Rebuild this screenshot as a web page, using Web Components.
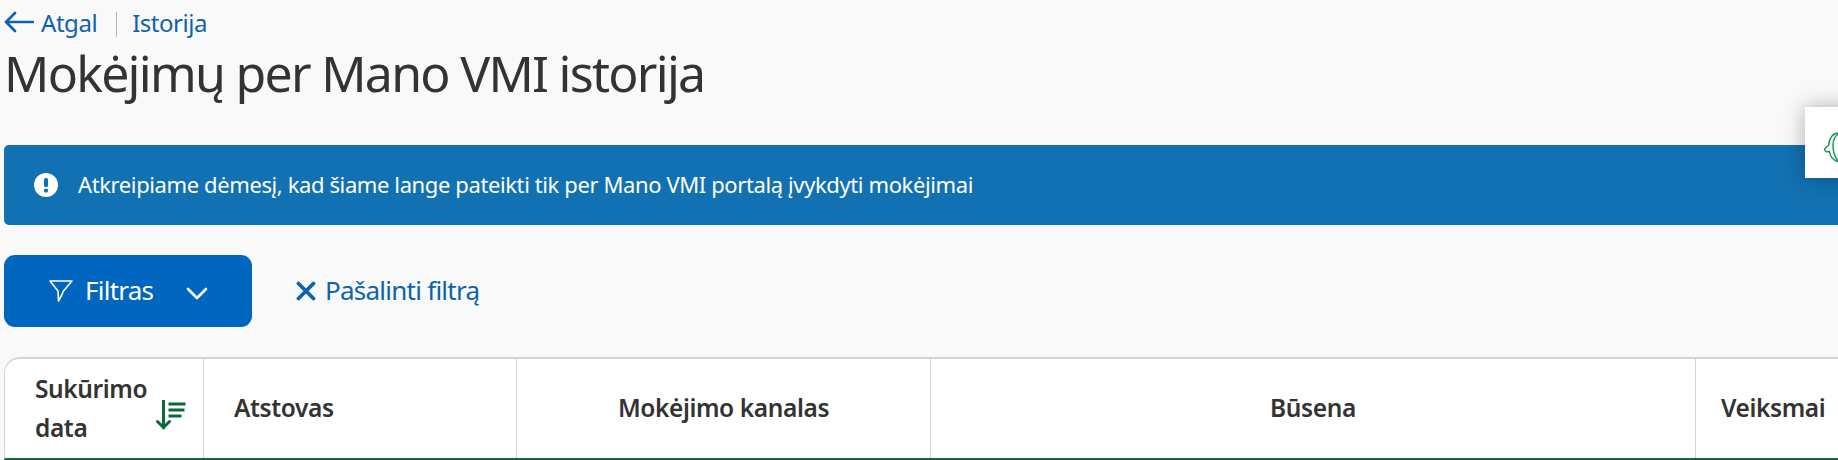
<!DOCTYPE html>
<html lang="lt">
<head>
<meta charset="utf-8">
<title>Mokėjimų per Mano VMI istorija</title>
<style>
  html, body { margin: 0; height: 100%; overflow: hidden; }
  body {
    background: #f9f9f9;
    color: #333;
    font-family: "Noto Sans", "Liberation Sans", sans-serif;
  }
  main { display: flex; flex-direction: column; padding: 0 0 0 4px; }
</style>
</head>
<body>
<main>
  <vmi-breadcrumb></vmi-breadcrumb>
  <vmi-title>Mokėjimų per Mano VMI istorija</vmi-title>
  <vmi-alert>Atkreipiame dėmesį, kad šiame lange pateikti tik per Mano VMI portalą įvykdyti mokėjimai</vmi-alert>
  <vmi-filters></vmi-filters>
  <vmi-table-head></vmi-table-head>
</main>
<vmi-help-tab></vmi-help-tab>

<script>
class VmiBreadcrumb extends HTMLElement {
  constructor() {
    super();
    this.attachShadow({ mode: "open" });
    this.shadowRoot.innerHTML = `
      <style>
        :host { display: flex; align-items: center; height: 46px; color: #0f62ac; font-size: 24px; letter-spacing: -0.46px; }
        span { margin-bottom: 2px; }
        svg { width: 30px; height: 22px; margin-right: 7px; margin-bottom: 2px; }
        .sep { width: 1px; height: 25px; background: #b0b8c0; margin: 2px 15px 0 19px; }
      </style>
      <svg viewBox="0 0 30 22" fill="none" stroke="#0f62ac" stroke-width="2.6" stroke-linecap="round" stroke-linejoin="round">
        <path d="M29 11H2M11 2l-9 9 9 9"/>
      </svg>
      <span>Atgal</span>
      <i class="sep"></i>
      <span>Istorija</span>
    `;
  }
}

class VmiTitle extends HTMLElement {
  constructor() {
    super();
    this.attachShadow({ mode: "open" });
    this.shadowRoot.innerHTML = `
      <style>
        :host { display: block; height: 99px; font-size: 50px; line-height: 54px; letter-spacing: -1.72px; color: #333; }
      </style>
      <slot></slot>
    `;
  }
}

class VmiAlert extends HTMLElement {
  constructor() {
    super();
    this.attachShadow({ mode: "open" });
    this.shadowRoot.innerHTML = `
      <style>
        :host { display: flex; align-items: center; height: 80px; padding-left: 30px; background: #1271b2; color: #fff; font-size: 22px; letter-spacing: -0.39px; border-radius: 5px 0 0 5px; }
        svg { width: 24px; height: 24px; margin-right: 20px; flex: none; }
        span { margin-bottom: 3px; }
      </style>
      <svg viewBox="0 0 24 24">
        <circle cx="12" cy="12" r="12" fill="#fff"/>
        <rect x="10" y="5" width="4" height="9" rx="1.6" fill="#1271b2"/>
        <circle cx="12" cy="17.6" r="2.1" fill="#1271b2"/>
      </svg>
      <span><slot></slot></span>
    `;
  }
}

class VmiFilters extends HTMLElement {
  constructor() {
    super();
    this.attachShadow({ mode: "open" });
    this.shadowRoot.innerHTML = `
      <style>
        :host { display: flex; align-items: center; gap: 45px; padding: 30px 0; font-size: 26px; letter-spacing: -0.75px; }
        span { margin-bottom: 2px; }
        .btn { display: flex; align-items: center; box-sizing: border-box; width: 248px; height: 72px; padding-left: 45px; background: #0066c0; color: #fff; border-radius: 11px; }
        .btn .funnel { width: 24px; height: 22px; margin-right: 12px; }
        .btn .chev { width: 22px; height: 13px; margin-left: 33px; margin-top: 4px; }
        .clear { display: flex; align-items: center; color: #0f62ac; }
        .clear svg { width: 20px; height: 20px; margin-right: 9px; margin-bottom: 1px; margin-left: -1px; }
      </style>
      <div class="btn">
        <svg class="funnel" viewBox="0 0 24 22" fill="none" stroke="#fff" stroke-width="1.6" stroke-linejoin="round">
          <path d="M1 1h22l-8.500 10-2 4.500-3 5.500-.5-10z"/>
        </svg>
        <span>Filtras</span>
        <svg class="chev" viewBox="0 0 22 13" fill="none" stroke="#fff" stroke-width="2.6" stroke-linecap="round" stroke-linejoin="round">
          <path d="M2 2l9 9 9-9"/>
        </svg>
      </div>
      <div class="clear">
        <svg viewBox="0 0 20 20" fill="none" stroke="#0f62ac" stroke-width="3.8" stroke-linecap="round">
          <path d="M2.500 2.500l15 15M17.500 2.500l-15 15"/>
        </svg>
        <span>Pašalinti filtrą</span>
      </div>
    `;
  }
}

class VmiTableHead extends HTMLElement {
  constructor() {
    super();
    this.attachShadow({ mode: "open" });
    this.shadowRoot.innerHTML = `
      <style>
        :host { display: grid; grid-template-columns: 199px 313px 414px 765px 1fr; height: 103px; box-sizing: border-box; background: #fff; border-top: 2px solid #d2d4d6; border-left: 1px solid #d2d4d6; border-bottom: 2px solid #0a6b38; border-top-left-radius: 16px; font-size: 24.5px; font-weight: 600; letter-spacing: -0.4px; color: #333; }
        .cell { display: flex; align-items: center; box-sizing: border-box; border-right: 1px solid #cfd4d8; padding-bottom: 2px; }
        .cell:last-child { border-right: 0; padding-left: 25px; }
        .center { justify-content: center; }
        .date { padding-left: 30px; line-height: 39px; }
        .date svg { width: 30px; height: 30px; margin-left: 9px; flex: none; margin-top: 15px; }
        .agent { padding-left: 30px; }
      </style>
      <div class="cell date">
        <span>Sukūrimo<br>data</span>
        <svg viewBox="0 0 30 30" fill="none" stroke="#0a6b38" stroke-width="3" stroke-linejoin="miter">
          <path d="M7.500 0v28M1.500 21.500L7.500 27.500l6-6" stroke-linecap="round"/>
          <path d="M12.500 4h17M12.500 10h16M12.500 16h13"/>
        </svg>
      </div>
      <div class="cell agent">Atstovas</div>
      <div class="cell center">Mokėjimo kanalas</div>
      <div class="cell center">Būsena</div>
      <div class="cell">Veiksmai</div>
    `;
  }
}

class VmiHelpTab extends HTMLElement {
  constructor() {
    super();
    this.attachShadow({ mode: "open" });
    this.shadowRoot.innerHTML = `
      <style>
        :host { position: fixed; top: 107px; left: 1805px; width: 70px; height: 71px; background: #fff; box-shadow: 0 0 20px rgba(0,0,0,.3); }
        svg { position: absolute; left: 18px; top: 24px; width: 40px; height: 34px; }
      </style>
      <svg viewBox="0 0 40 34" fill="none" stroke="#1a9a5c" stroke-width="1.5" stroke-linecap="round" stroke-linejoin="round">
        <path d="M16 2C10 2 6.500 7 5.500 14.500L1.500 18c0 2 2 3.500 5 2.500M16 2c-4 3-6 7-6 12 0 7 2 13 6 17M6.500 20.500c.5 4 3 8 7.500 10"/>
      </svg>
    `;
  }
}

customElements.define("vmi-breadcrumb", VmiBreadcrumb);
customElements.define("vmi-title", VmiTitle);
customElements.define("vmi-alert", VmiAlert);
customElements.define("vmi-filters", VmiFilters);
customElements.define("vmi-table-head", VmiTableHead);
customElements.define("vmi-help-tab", VmiHelpTab);
</script>
</body>
</html>
